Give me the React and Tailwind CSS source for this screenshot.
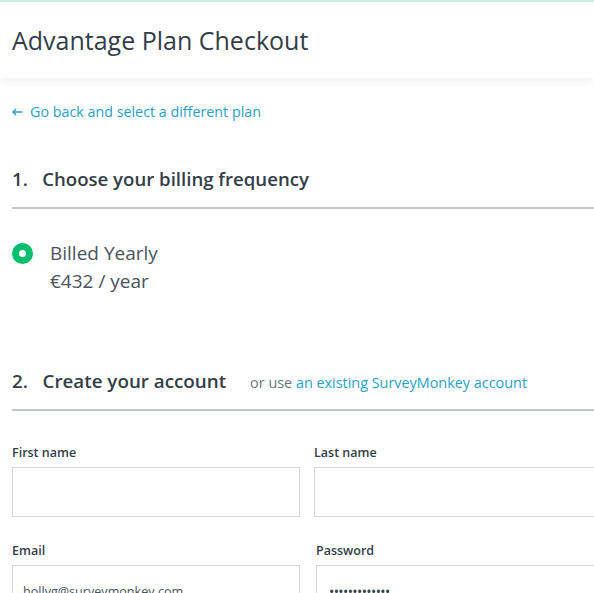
import React from "react";

export default function App() {
  return (
    <div className="w-[594px] h-[593px] overflow-hidden bg-white text-[#333e48]" style={{ fontFamily: '"Open Sans", "Noto Sans", sans-serif' }}>
      <div className="border-t-2 border-[#c5f0df] h-[78px] flex items-center pl-3 bg-white relative z-10 shadow-[0_3px_8px_rgba(0,0,0,0.06)]">
        <h1 className="text-[25px] leading-[30px] font-normal">Advantage Plan Checkout</h1>
      </div>
      <div className="pl-3 w-[640px]">
        <a className="mt-[24px] flex items-center text-[14.3px] leading-[20px] text-[#2a9fc6]">
          <svg width="11" height="8" viewBox="0 0 11 8" className="mr-[7px]">
            <path d="M10.5 4H1M4 1L1 4l3 3" fill="none" stroke="#2a9fc6" strokeWidth="1.4" />
          </svg>
          Go back and select a different plan
        </a>
        <h2 className="mt-[45px] text-[18.6px] leading-[24px] font-semibold">1.&nbsp;&nbsp;&nbsp;Choose your billing frequency</h2>
        <div className="mt-[16px] h-[2px] bg-[#c3c6c9]" />
        <div className="mt-[30px] flex items-start">
          <div className="mt-[4px] w-[21px] h-[21px] rounded-full bg-[#00bf6f] flex items-center justify-center shrink-0">
            <div className="w-[7px] h-[7px] rounded-full bg-white" />
          </div>
          <div className="ml-[17px] text-[19px] leading-[28px] text-[#4a545e]">
            <div>Billed Yearly</div>
            <div>€432 / year</div>
          </div>
        </div>
        <div className="mt-[74px] flex items-baseline">
          <h2 className="text-[18.8px] leading-[24px] font-semibold">2.&nbsp;&nbsp;&nbsp;Create your account</h2>
          <span className="ml-[24px] text-[14.4px] text-[#6b7787]">or use <a className="text-[#2a9fc6]">an existing SurveyMonkey account</a></span>
        </div>
        <div className="mt-[15px] h-[2px] bg-[#c3c6c9]" />
        <div className="mt-[34px] grid grid-cols-[288px_300px] gap-x-[14px]">
          <div>
            <label className="block text-[12.5px] leading-[16px] font-semibold">First name</label>
            <div className="mt-[6px] h-[50px] border border-[#d5d7d9]" />
          </div>
          <div>
            <label className="block text-[12.5px] leading-[16px] font-semibold">Last name</label>
            <div className="mt-[6px] h-[50px] border border-[#d5d7d9]" />
          </div>
          <div className="mt-[26px]">
            <label className="block text-[12.5px] leading-[16px] font-semibold">Email</label>
            <div className="mt-[6px] h-[50px] border border-[#d5d7d9] pl-[10px] pt-[16px] text-[12.6px] leading-[20px] text-[#4a545e]">hollyg@surveymonkey.com</div>
          </div>
          <div className="mt-[26px] pl-[2px]">
            <label className="block text-[12.5px] leading-[16px] font-semibold">Password</label>
            <div className="mt-[6px] h-[50px] border border-[#d5d7d9] pl-[12px] pt-[16px] text-[14px] leading-[20px] text-[#333e48] tracking-[-0.6px]">•••••••••••••</div>
          </div>
        </div>
      </div>
    </div>
  );
}
